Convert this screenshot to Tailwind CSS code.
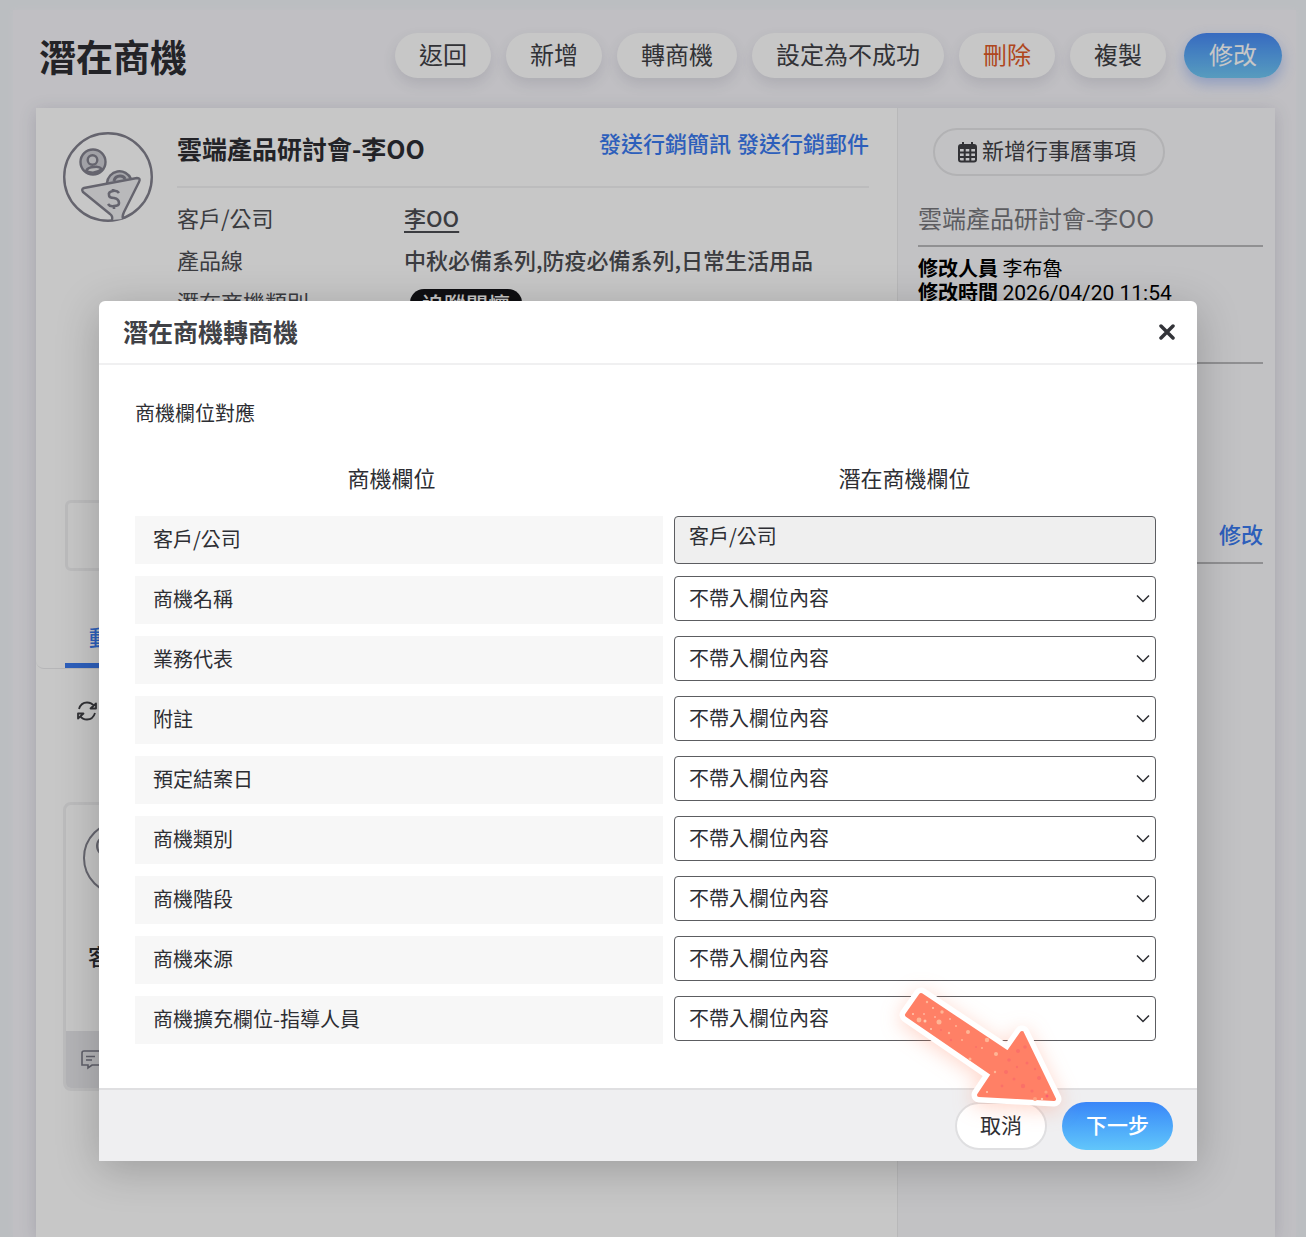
<!DOCTYPE html>
<html lang="zh-TW">
<head>
    <meta charset="UTF-8">
    <meta name="viewport" content="width=device-width, initial-scale=1.0">
    <title>潛在商機轉商機</title>
    <script src="https://cdn.jsdelivr.net/npm/@tailwindcss/browser@4"></script>
</head>
<body class="bg-white font-['Noto_Sans_CJK_TC',sans-serif] text-[#2d2e33]">

    <div class="relative mr-px mb-px min-h-[calc(100vh-1px)] flex flex-col bg-[#f0f4f8] pt-[10px] pl-[13px] pr-[10px] overflow-hidden">

        <!-- 主畫面 -->
        <div class="flex-1 flex flex-col bg-[#f6f5fa] shadow-[0_0_6px_#f6f5fa]">
            <header class="flex items-start justify-between h-[98px] pt-[23px] pl-[26px] pr-[14px]">
                <h1 class="text-[37px] leading-[46px] font-bold">潛在商機</h1>
                <div class="flex gap-[15px] text-2xl text-[#404146]">
                    <button class="h-[45px] px-6 pb-1 rounded-full bg-white shadow-[0_6px_14px_rgba(60,60,80,0.12)]">返回</button>
                    <button class="h-[45px] px-6 pb-1 rounded-full bg-white shadow-[0_6px_14px_rgba(60,60,80,0.12)]">新增</button>
                    <button class="h-[45px] px-6 pb-1 rounded-full bg-white shadow-[0_6px_14px_rgba(60,60,80,0.12)]">轉商機</button>
                    <button class="h-[45px] px-6 pb-1 rounded-full bg-white shadow-[0_6px_14px_rgba(60,60,80,0.12)]">設定為不成功</button>
                    <button class="h-[45px] px-6 pb-1 rounded-full bg-white shadow-[0_6px_14px_rgba(60,60,80,0.12)] text-[#e05a28]">刪除</button>
                    <button class="h-[45px] px-6 pb-1 rounded-full bg-white shadow-[0_6px_14px_rgba(60,60,80,0.12)]">複製</button>
                    <button class="h-[45px] px-[25px] pb-1 ml-[3px] rounded-full bg-linear-to-b from-[#4889f7] to-[#71c8f4] text-white shadow-[0_6px_14px_rgba(70,120,240,0.35)]">修改</button>
                </div>
            </header>

            <div class="flex-1 flex ml-[23px] mr-[21px] bg-white shadow-[0_3px_16px_rgba(60,60,90,0.18)]">
                <main class="flex-1 min-w-0 border-r border-[#ececee]">
                    <section class="flex gap-6 h-[392px] pt-6 pl-[27px] pr-7">
                        <svg class="shrink-0 size-[90px]" viewBox="0 0 90 90" fill="none" stroke="#82818d" stroke-width="2.4">
                            <circle cx="45" cy="45" r="43.800"/>
                            <circle cx="30" cy="30" r="12.500" fill="#cfcfd5"/>
                            <circle cx="29.500" cy="28" r="4.800" fill="#e2e2e6"/>
                            <path d="M23 39q2-4 8-4q5-1 8 2q-7 6-16 2z" fill="#e8e8ea"/>
                            <path d="M44 51a12.500 12.500 0 0 1 24-4" fill="#d4d4da"/>
                            <path d="M51 49q1-5 6-5q4 0 5 3" stroke-width="3"/>
                            <path d="M49 88q1-4-2-6L20 60q-2-3 1-4l53-10q4 0 2 4L61 80q-2 4-1 7" fill="#ededf0" stroke-linejoin="round"/>
                            <path d="M56 61q-2-3-6-2q-5 1-4 4q0 3 5 3q5 1 5 5q0 3-5 3q-4 1-6-2M50 57v3M51 74v3" stroke-width="2.600"/>
                        </svg>
                        <div class="flex-1">
                            <div class="flex justify-between h-14 border-b-2 border-[#f1f1f3]">
                                <h2 class="text-[25px] leading-8 font-bold">雲端產品研討會-李OO</h2>
                                <div class="flex gap-[6px] text-[22px] leading-5 font-medium text-[#3a7af0]">
                                    <a href="#">發送行銷簡訊</a>
                                    <a href="#">發送行銷郵件</a>
                                </div>
                            </div>
                            <dl class="grid grid-cols-[227px_1fr] auto-rows-[42px] pt-2 text-[22px] leading-[42px] text-[#4c4d52]">
                                <dt>客戶/公司</dt>
                                <dd class="font-medium"><a href="#" class="underline underline-offset-4">李OO</a></dd>
                                <dt>產品線</dt>
                                <dd class="font-medium">中秋必備系列,防疫必備系列,日常生活用品</dd>
                                <dt>潛在商機類別</dt>
                                <dd class="flex items-center pt-1 pl-[6px]"><span class="rounded-full bg-[#141418] px-3 leading-7 font-medium text-white">追蹤關懷</span></dd>
                            </dl>
                        </div>
                    </section>

                    <section class="px-[29px]">
                        <div class="h-[71px] rounded-md border-[3px] border-[#f1f1f3]"></div>
                    </section>

                    <nav class="flex h-[98px] items-end border-b border-[#eaeaec] rounded-bl-lg pl-[29px]">
                        <a href="#" class="border-b-5 border-[#3a7af0] px-6 pb-[7px] text-[22px] leading-10 font-medium text-[#3a7af0]">動態</a>
                    </nav>

                    <section class="pt-8 px-[27px]">
                        <button class="block ml-[13px]" aria-label="重新整理">
                            <svg class="w-[22px] h-5" viewBox="0 0 22 20" fill="none" stroke="#404146" stroke-width="1.800" stroke-linejoin="round">
                                <path d="M3 8Q5 1.500 11 1.500q4.500 0 7 3.500M14.500 7.500h5.500V2.500zM19 12q-2 6.500-8 6.500q-4.500 0-7-3.500M7.500 12.500H2v5z"/>
                            </svg>
                        </button>
                        <div class="mt-[81px] w-[220px] rounded-lg border-[3px] border-[#f1f1f3] overflow-hidden">
                            <div class="h-[226px] pt-4 pl-[17px]">
                                <svg class="size-[74px]" viewBox="0 0 74 74" fill="none" stroke="#83838f" stroke-width="2">
                                    <circle cx="37" cy="37" r="36"/>
                                    <circle cx="24" cy="25" r="10" fill="#d8d8dd"/>
                                </svg>
                                <p class="pt-10 pl-[5px] text-[22px] leading-10 font-medium">客戶</p>
                            </div>
                            <div class="h-[57px] bg-[#e7e7eb] pt-[19px] pl-[15px]">
                                <svg class="w-[26px] h-5" viewBox="0 0 26 20" fill="none" stroke="#7b7b88" stroke-width="1.600">
                                    <path d="M3 1h20v14H11l-4 3v-3H1V3q0-2 2-2zM5 6.500h9M5 10h6"/>
                                </svg>
                            </div>
                        </div>
                    </section>
                </main>

                <aside class="w-[377px] shrink-0 bg-[#f9f9fb] pt-5 pl-5 pr-3">
                    <button class="flex items-center gap-[5px] ml-[15px] h-[48px] rounded-full border-2 border-[#e4e4e7] pl-[23px] pr-[27px] text-[22px] text-[#404146]">
                        <svg class="w-[19px] h-[22px]" viewBox="0 0 19 22" fill="none" stroke="#404146" stroke-width="2">
                            <rect x="1" y="4" width="17" height="16.500" rx="2"/>
                            <path d="M1 7h17M1 11.500h17M1 16h17M6.700 7v14M12.300 7v14M5 1v5M14 1v5"/>
                            <path d="M2 6h15" stroke-width="3.500"/>
                        </svg>
                        <span class="pb-[6px]">新增行事曆事項</span>
                    </button>
                    <h2 class="mt-[17px] h-[54px] border-b-2 border-[#b9b9bc] text-2xl leading-[50px] text-[#77777c]">雲端產品研討會-李OO</h2>
                    <div class="h-[117px] border-b-2 border-[#b9b9bc] pt-[9px] text-xl leading-6 text-black">
                        <p><b>修改人員</b> 李布魯</p>
                        <p><b>修改時間</b> <span class="font-[Roboto,sans-serif] text-[21px]">2026/04/20 11:54</span></p>
                    </div>
                    <div class="flex h-[200px] items-end justify-end border-b-2 border-[#b9b9bc] pb-[9px]">
                        <a href="#" class="text-[22px] leading-10 font-medium text-[#3a7af0]">修改</a>
                    </div>
                </aside>
            </div>
        </div>

        <!-- 遮罩與對話框 -->
        <div class="absolute inset-0 bg-black/22 pt-[301px] pl-[99px] pr-[109px]">
            <form class="relative rounded-t-md bg-white shadow-[0_8px_44px_rgba(0,0,0,0.22)]" role="dialog" aria-labelledby="dialog-title">
                <div class="flex items-center justify-between h-16 border-b-2 border-[#f0f0f1] pl-6 pr-[22px]">
                    <h3 id="dialog-title" class="text-[25px] font-bold text-[#404146]">潛在商機轉商機</h3>
                    <button type="button" aria-label="關閉">
                        <svg class="size-4" viewBox="0 0 16 16" stroke="#333439" stroke-width="3.500" stroke-linecap="round">
                            <path d="M2 2l12 12M14 2L2 14"/>
                        </svg>
                    </button>
                </div>

                <div class="px-9 pt-8 pb-11 text-xl">
                    <p class="leading-8">商機欄位對應</p>
                    <div class="grid grid-cols-2 pt-7 text-center text-[22px] leading-10">
                        <div>商機欄位</div>
                        <div>潛在商機欄位</div>
                    </div>
                    <div id="field-rows" class="flex flex-col gap-3 pt-[19px] pr-[5px]">
                        <div class="grid grid-cols-[528fr_482fr] gap-[11px] h-12">
                            <label for="field-0" class="bg-[#f7f7f7] px-[18px] leading-[46px]">客戶/公司</label>
                            <input id="field-0" type="text" value="客戶/公司" disabled class="min-w-0 rounded-sm border border-[#5c5d61] bg-[#efefef] px-[14px] pb-2">
                        </div>
                    </div>
                </div>

                <div class="flex justify-end gap-[15px] border-t-2 border-[#dfdfe1] bg-[#efeff1] pt-3 pb-[11px] px-6 text-[21px]">
                    <button type="button" class="h-12 rounded-full border-2 border-[#dfdfe1] bg-white px-[23px] pb-[2px]">取消</button>
                    <button type="submit" class="h-12 rounded-full bg-linear-to-b from-[#3a86f8] to-[#62c6fa] px-6 pb-[2px] font-medium text-white">下一步</button>
                </div>

                <!-- 指向「下一步」的箭頭 -->
                <svg class="absolute right-[127px] bottom-[41px] w-[180px] h-[140px] overflow-visible pointer-events-none drop-shadow-[0_4px_10px_rgba(255,120,80,0.3)]" viewBox="890 980 180 140" stroke-linejoin="round" aria-hidden="true">
                    <path d="M921 995L1008 1053L1022 1033L1054 1099L979 1095L993 1074L907 1015Z" fill="#fff" stroke="#fff" stroke-width="15"/>
                    <path d="M921 995L1008 1053L1022 1033L1054 1099L979 1095L993 1074L907 1015Z" fill="#ff8066" stroke="#ff8066" stroke-width="4"/>
                    <g id="arrow-dots"></g>
                </svg>
            </form>
        </div>
    </div>

    <script>
        const fields = ['商機名稱', '業務代表', '附註', '預定結案日', '商機類別', '商機階段', '商機來源', '商機擴充欄位-指導人員'];
        const rows = document.getElementById('field-rows');

        fields.forEach((name, i) => {
            rows.insertAdjacentHTML('beforeend', `
                <div class="grid grid-cols-[528fr_482fr] gap-[11px] h-12">
                    <label for="field-${i + 1}" class="bg-[#f7f7f7] px-[18px] leading-[46px]">${name}</label>
                    <div class="relative h-[45px]">
                        <select id="field-${i + 1}" class="appearance-none w-full h-full rounded-sm border border-[#5c5d61] bg-white px-[14px] pb-[2px]">
                            <option>不帶入欄位內容</option>
                        </select>
                        <svg class="absolute right-[6px] top-[18px] w-[14px] h-[9px] pointer-events-none" viewBox="0 0 14 9" fill="none" stroke="#2d2e33" stroke-width="1.500">
                            <path d="M1 1.500l6 6l6-6"/>
                        </svg>
                    </div>
                </div>`);
        });

        // 箭頭上的斑點 [x, y, r, 顏色]
        const dots = [
            [919, 1020, 2.4, '#ffb596'], [939, 1022, 2.5, '#ffb596'], [942, 1012, 1.7, '#ffb596'], [968, 1032, 2, '#ffb596'],
            [987, 1040, 2.2, '#ffb596'], [996, 1054, 2, '#ffb596'], [970, 1059, 1.5, '#ffb596'], [995, 1072, 1.2, '#ffb596'],
            [927, 1002, 1.2, '#ffb596'], [913, 1014, 1, '#ffc9b0'], [925, 1021, 1.5, '#ffc9b0'], [933, 1008, 1, '#ffc9b0'],
            [931, 1029, 1, '#ffc9b0'], [949, 1033, 1.2, '#ffb596'], [956, 1026, 1, '#ffb596'], [962, 1040, 1, '#ffb596'],
            [924, 1014, 0.8, '#ffd8c6'], [935, 1017, 0.8, '#ffd8c6'], [950, 1019, 0.8, '#ffd8c6'], [1046, 1092, 1.6, '#ffa080'],
            [1035, 1099, 2, '#ffa080'], [1042, 1099, 1.2, '#ffc9b0'], [987, 1092, 1, '#ffc9b0'], [982, 1048, 1, '#ffb596'],
            [1018, 1051, 2, '#fb7068'], [1025, 1047, 1.8, '#fb7068'], [1009, 1060, 1.8, '#fb7068'], [1027, 1063, 1.5, '#fb7068'],
            [1006, 1072, 2, '#fb7068'], [1014, 1079, 1.5, '#fb7068'], [1023, 1086, 2.2, '#fb7068'], [1039, 1078, 2, '#fb7068'],
            [1032, 1091, 1.6, '#fb7068'], [1002, 1086, 1.4, '#fb7068'], [1017, 1067, 1.2, '#fb7068'], [1047, 1096, 1.5, '#fb6070'],
            [951, 1040, 1.2, '#fb7068'], [941, 1030, 1, '#fb7068'], [976, 1047, 1, '#fb7068'], [1035, 1069, 1.2, '#fb7068']
        ];
        document.getElementById('arrow-dots').innerHTML = dots
            .map(([x, y, r, color]) => `<circle cx="${x}" cy="${y}" r="${r}" fill="${color}"/>`)
            .join('');
    </script>
</body>
</html>
